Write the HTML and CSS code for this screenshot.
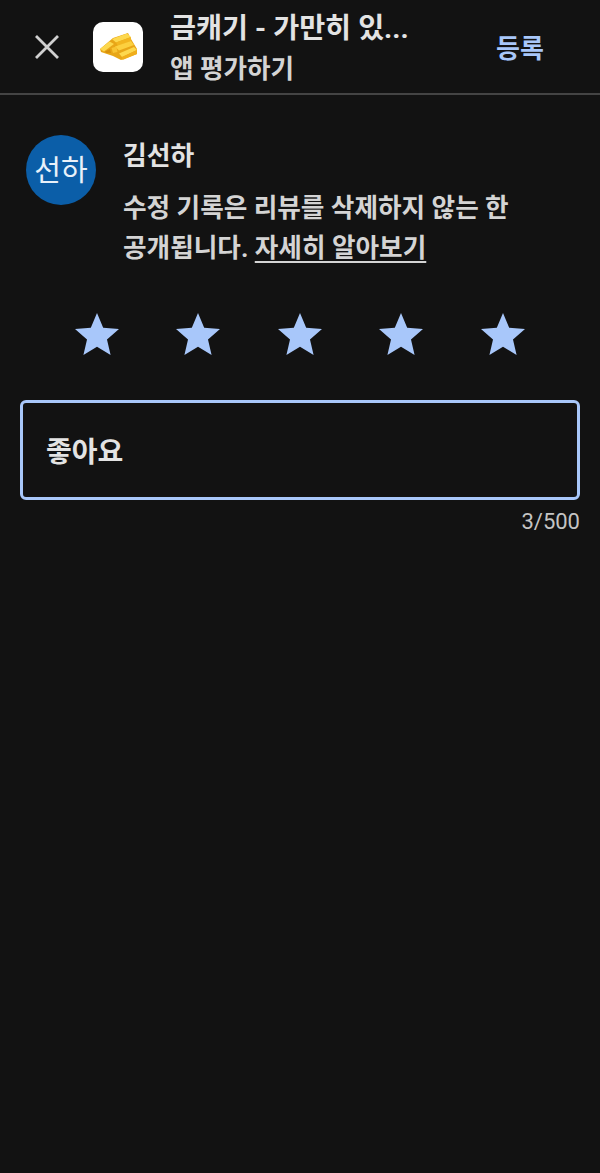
FILE: index.html
```html
<!DOCTYPE html>
<html lang="ko">
<head>
<meta charset="utf-8">
<title>앱 평가하기</title>
<link rel="stylesheet" href="styles.css">
</head>
<body>
<header class="topbar">
  <svg class="close" width="28" height="28" viewBox="0 0 28 28" aria-label="닫기"><path d="M3 3 L25 25 M25 3 L3 25" fill="none" stroke="#d0d0d0" stroke-width="2.8"/></svg>
  <div class="appicon">
    <svg width="50" height="50" viewBox="0 0 50 50">
      <path d="M7 27 20 16 35 11 38 17 44 27 44 32 28 38 20 34 8 30Z" fill="#e8a617"/>
      <path d="M19 17 34 11.5 38 15 23 20.5Z" fill="#fdd84e"/>
      <path d="M23 20.5 38 15 38 19 25 24Z" fill="#f2b51f"/>
      <path d="M7 27 16.5 19.5 21 22 11 29.5Z" fill="#fdd84e"/>
      <path d="M22 24.5 38 19 41 23 26 28.5Z" fill="#fcd03f"/>
      <path d="M26 31.5 41 25 44 28 29 35Z" fill="#fdd84e"/>
      <path d="M29 35 44 28 44 32 29.5 38Z" fill="#f0ae1b"/>
      <path d="M12 29.5 17 27 18 31 13 31Z" fill="#d9920c"/>
      <path d="M18.5 26 23.5 24.5 24.5 30 20 31Z" fill="#f8c432"/>
    </svg>
  </div>
  <div class="titles">
    <div class="apptitle">금캐기 - 가만히 있...</div>
    <div class="subtitle">앱 평가하기</div>
  </div>
  <div class="submit">등록</div>
</header>
<main class="content">
  <section class="user">
    <div class="avatar">선하</div>
    <div class="userinfo">
      <div class="username">김선하</div>
      <p class="notice">수정 기록은 리뷰를 삭제하지 않는 한<br>공개됩니다. <span class="link">자세히 알아보기</span></p>
    </div>
  </section>
  <section class="stars">
    <svg class="star" width="44" height="42" viewBox="2 2 20 19"><path d="M12 17.27 18.18 21l-1.64-7.03L22 9.24l-7.19-.61L12 2 9.19 8.63 2 9.24l5.46 4.73L5.82 21z"/></svg>
    <svg class="star" width="44" height="42" viewBox="2 2 20 19"><path d="M12 17.27 18.18 21l-1.64-7.03L22 9.24l-7.19-.61L12 2 9.19 8.63 2 9.24l5.46 4.73L5.82 21z"/></svg>
    <svg class="star" width="44" height="42" viewBox="2 2 20 19"><path d="M12 17.27 18.18 21l-1.64-7.03L22 9.24l-7.19-.61L12 2 9.19 8.63 2 9.24l5.46 4.73L5.82 21z"/></svg>
    <svg class="star" width="44" height="42" viewBox="2 2 20 19"><path d="M12 17.27 18.18 21l-1.64-7.03L22 9.24l-7.19-.61L12 2 9.19 8.63 2 9.24l5.46 4.73L5.82 21z"/></svg>
    <svg class="star" width="44" height="42" viewBox="2 2 20 19"><path d="M12 17.27 18.18 21l-1.64-7.03L22 9.24l-7.19-.61L12 2 9.19 8.63 2 9.24l5.46 4.73L5.82 21z"/></svg>
  </section>
  <div class="field">좋아요</div>
  <div class="counter">3/500</div>
</main>
</body>
</html>
```
FILE: styles.css
```css
* { box-sizing: border-box; }
html, body { margin: 0; padding: 0; }
body {
  width: 600px;
  height: 1173px;
  overflow: hidden;
  background: #121212;
  color: #e3e3e3;
  font-family: "Roboto", "Noto Sans CJK KR", sans-serif;
}
.topbar {
  display: flex;
  align-items: center;
  height: 95px;
  border-bottom: 2px solid #444;
  padding-left: 33px;
}
.close { flex: none; }
.appicon {
  flex: none;
  width: 50px;
  height: 50px;
  margin-left: 32px;
  background: #fff;
  border-radius: 10px;
}
.appicon svg { display: block; }
.titles {
  flex: none;
  width: 300px;
  margin-left: 27px;
  padding-top: 3px;
}
.apptitle {
  font-size: 28.25px;
  font-weight: 700;
  line-height: 36px;
  white-space: nowrap;
}
.subtitle {
  margin-top: 6px;
  font-size: 25.6px;
  font-weight: 700;
  line-height: 32px;
  color: #d4d4d4;
}
.submit {
  margin-left: 26px;
  font-size: 26px;
  font-weight: 700;
  color: #a8c7fa;
}
.content {
  padding: 40px 20px 0;
}
.user {
  display: flex;
  padding-left: 6px;
}
.avatar {
  flex: none;
  width: 70px;
  height: 70px;
  border-radius: 50%;
  background: #0b5ea8;
  color: #e8f1fa;
  font-size: 29px;
  line-height: 72px;
  text-align: center;
}
.userinfo { margin-left: 27px; padding-top: 1px; }
.username {
  font-size: 25.8px;
  font-weight: 700;
  line-height: 40px;
}
.notice {
  margin: 12px 0 0;
  font-size: 25.65px;
  font-weight: 700;
  line-height: 40px;
  color: #d4d4d4;
}
.link {
  text-decoration: underline;
  text-decoration-thickness: 2px;
  text-underline-offset: 4px;
}
.stars {
  display: grid;
  grid-template-columns: repeat(5, 101.5px);
  justify-content: start;
  justify-items: center;
  margin-top: 45px;
  padding-left: 26px;
}
.star { display: block; fill: #a8c7fa; }
.field {
  display: flex;
  align-items: center;
  height: 100px;
  margin-top: 45px;
  padding-left: 23px;
  border: 3px solid #a8c7fa;
  border-radius: 6px;
  font-size: 28px;
  font-weight: 700;
}
.counter {
  margin-top: 9px;
  text-align: right;
  font-size: 22px;
  line-height: 26px;
  color: #c4c4c4;
}
```
